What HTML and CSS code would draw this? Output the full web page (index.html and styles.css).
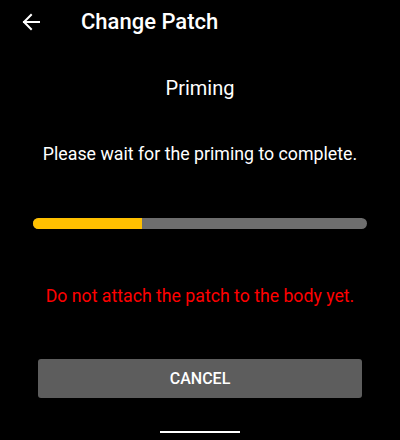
FILE: index.html
```html
<!DOCTYPE html>
<html>
<head>
<meta charset="utf-8">
<link rel="stylesheet" href="styles.css">
</head>
<body>
<div class="screen">
  <header class="appbar">
    <svg class="back" width="18" height="18" viewBox="0 0 18 18" fill="none" stroke="#fff" stroke-width="2" stroke-linecap="square">
      <path d="M2 9H17"/>
      <path d="M9 2L2 9L9 16"/>
    </svg>
    <h1 class="title">Change Patch</h1>
  </header>
  <h2 class="subtitle">Priming</h2>
  <p class="msg">Please wait for the priming to complete.</p>
  <div class="progress"><div class="fill" style="width:32.6%"></div></div>
  <p class="warn">Do not attach the patch to the body yet.</p>
  <button class="cancel">CANCEL</button>
  <div class="home"></div>
</div>
</body>
</html>
```
FILE: styles.css
```css
html, body {
  margin: 0;
  padding: 0;
  background: #000;
}
.screen {
  width: 400px;
  height: 440px;
  display: flex;
  flex-direction: column;
  font-family: Roboto, "Noto Sans", sans-serif;
  color: #fff;
}
.appbar {
  display: flex;
  align-items: center;
  height: 44px;
  padding-left: 22px;
}
.back {
  display: block;
}
.title {
  margin: 0 0 0 41px;
  font-size: 22px;
  font-weight: 500;
  line-height: 26px;
}
.subtitle {
  margin: 32px 0 0;
  text-align: center;
  font-size: 20px;
  font-weight: 400;
  line-height: 24px;
}
.msg {
  margin: 43px 0 0;
  text-align: center;
  font-size: 17.75px;
  line-height: 22px;
}
.progress {
  margin: 53px 33px 0;
  height: 11px;
  border-radius: 6px;
  background: #6e6e6e;
  overflow: hidden;
}
.fill {
  height: 100%;
  background: #ffc000;
}
.warn {
  margin: 56px 0 0;
  text-align: center;
  font-size: 17.7px;
  line-height: 22px;
  color: #ff0000;
}
.cancel {
  margin: 52px 38px 0;
  height: 39px;
  border: none;
  border-radius: 3px;
  background: #5d5d5d;
  color: #fff;
  font-family: Roboto, sans-serif;
  font-size: 16px;
  font-weight: 500;
  padding: 0;
}
.home {
  margin: 33px auto 0;
  width: 80px;
  height: 2px;
  background: #fff;
}
```
